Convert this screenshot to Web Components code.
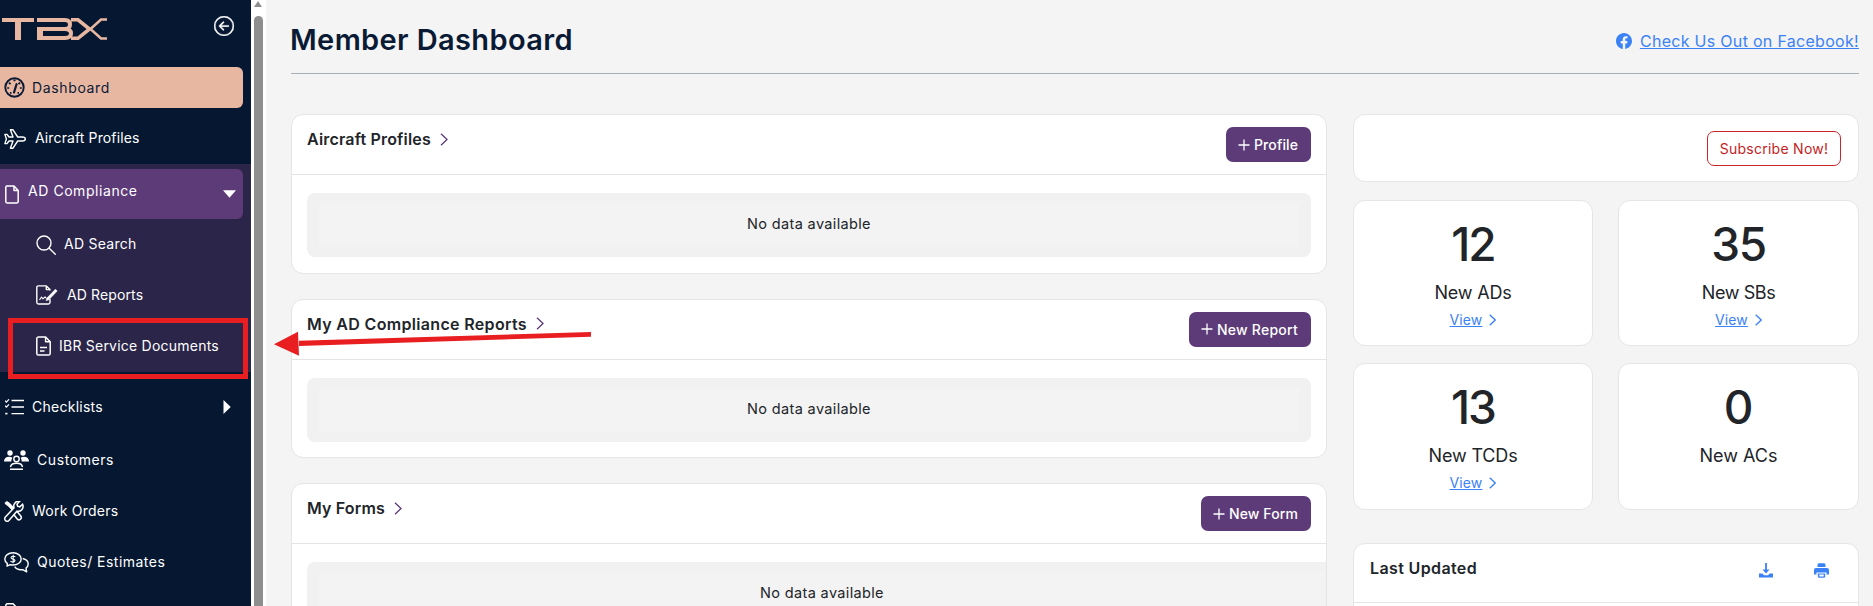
<!doctype html>
<html lang="en">
<head>
<meta charset="utf-8">
<title>Member Dashboard</title>
<style>
html,body{margin:0;height:100%;background:#f4f4f4;overflow:hidden}
body{font-family:Inter,"Liberation Sans",sans-serif;color:#212529}
svg{display:block}
</style>
</head>
<body>
<template id="t-app"><style>
:host{display:flex;width:1873px;height:606px;overflow:hidden;position:relative}
.main{flex:1;min-width:0;padding:0 14px 0 25px}
</style><slot name="side"></slot><slot name="bar"></slot><div class="main"><slot></slot></div><slot name="over"></slot></template>

<template id="t-sidebar"><style>
:host{display:block;width:251px;height:606px;flex:none;background:#061831;overflow:hidden}
.brand{height:67px;display:flex;justify-content:space-between;align-items:flex-start;padding:0 17px 0 2px;box-sizing:border-box}
</style><div class="brand"><slot name="logo"></slot><slot name="back"></slot></div><slot></slot></template>

<template id="t-item"><style>
:host{display:flex;align-items:center;box-sizing:border-box;width:243px;height:var(--h,50px);margin-top:var(--mt,0);padding-left:var(--pl,4px);padding-bottom:var(--pb,0);gap:var(--gap,8px);font-size:14px;font-weight:400;color:#fff;white-space:nowrap;position:relative}
:host([active]){background:#e8b7a2;color:#0a1a35;font-weight:400;border-radius:0 6px 6px 0}
:host([open]){background:#5c3b78;border-radius:0 6px 6px 0}
:host(:not([active])) .x{padding-bottom:2px}
.x{padding-bottom:1px}
.c{margin-left:auto;margin-right:var(--cr,7px);flex:none}
</style><slot name="icon"></slot><span class="x"><slot></slot></span><span class="c"><slot name="caret"></slot></span></template>

<template id="t-group"><style>
:host{display:block;margin-top:0;padding-top:5px;height:208px;box-sizing:border-box;background:#2a2549}
</style><slot></slot></template>

<template id="t-scroll"><style>
:host{display:block;width:15px;height:606px;flex:none;background:#fff;box-sizing:border-box;padding:1px 3px 0}
.up{width:0;height:0;border-left:4.5px solid transparent;border-right:4.5px solid transparent;border-bottom:6px solid #8e8e8e}
.thumb{width:9px;height:600px;margin-top:9px;background:#8e8e8e;border-radius:5px 5px 0 0}
</style><div class="up"></div><div class="thumb"></div></template>

<template id="t-head"><style>
:host{display:flex;justify-content:space-between;align-items:center;height:66px;padding-top:7px;border-bottom:1px solid #a8aeb6;margin-bottom:40px}
.t{font-size:29px;font-weight:600;letter-spacing:.37px;color:#0a1a35;line-height:34px;margin-left:-1px}
.l{display:flex;align-items:center;gap:8px;color:#3b82f6;font-size:16px;letter-spacing:.3px;margin-top:2px}
.l span{text-decoration:underline}
</style><div class="t"><slot name="title"></slot></div><div class="l"><slot name="icon"></slot><span><slot name="link"></slot></span></div></template>

<template id="t-layout"><style>
:host{display:grid;grid-template-columns:1036px 506px;column-gap:26px;align-items:start}
.col{display:flex;flex-direction:column}
</style><div class="col"><slot name="left"></slot></div><div class="col"><slot name="right"></slot></div></template>

<template id="t-card"><style>
:host{display:block;background:#fff;border:1px solid #e5e5e5;border-radius:12px;box-sizing:border-box;overflow:hidden;height:159.5px;margin-bottom:25px}
.h{display:flex;justify-content:space-between;align-items:flex-start;height:59px;box-sizing:border-box;padding:12px 15px 0}
.line{height:1px;background:#e4e4e4}
.tt{display:flex;align-items:center;gap:9px;font-size:16px;font-weight:600;color:#212529;line-height:24px}
.b{padding:18px 15px 16px}
</style><div class="h"><div class="tt"><span><slot name="title"></slot></span><slot name="chev"></slot></div><div class="a"><slot name="action"></slot></div></div><div class="line"></div><div class="b"><slot></slot></div></template>

<template id="t-empty"><style>
:host{display:block;background:#f1f1f1;border-radius:8px;padding:10px 12px;height:64px;box-sizing:border-box;font-size:14.5px;color:#212529;letter-spacing:.35px}
:host([wide]){margin-right:-26px}
div{height:44px;background:#f3f3f3;display:flex;align-items:center;justify-content:center;box-sizing:border-box;padding-bottom:3px}
</style><div><slot></slot></div></template>

<template id="t-btn"><style>
:host{display:inline-flex;align-items:center;gap:4px;height:35px;padding:0 13px 0 12px;box-sizing:border-box;background:#5c3b78;color:#fff;border-radius:7px;font-size:14px;font-weight:500;white-space:nowrap}
</style><slot name="icon"></slot><span><slot></slot></span></template>

<template id="t-sub"><style>
:host{display:flex;justify-content:flex-end;align-items:center;height:68px;padding-right:17px;box-sizing:border-box;background:#fff;border:1px solid #e5e5e5;border-radius:12px;margin-bottom:18px}
a{display:flex;align-items:center;justify-content:center;height:35px;width:134px;box-sizing:border-box;border:1px solid #c9252c;border-radius:7px;color:#c41e24;font-size:14px;font-weight:400;letter-spacing:.27px;white-space:nowrap}
</style><a><slot></slot></a></template>

<template id="t-stats"><style>
:host{display:grid;grid-template-columns:240px 241px;column-gap:25px;row-gap:17px;grid-template-rows:146px 147px;margin-bottom:33px}
</style><slot></slot></template>

<template id="t-stat"><style>
:host{display:flex;flex-direction:column;align-items:center;background:#fff;border:1px solid #e5e5e5;border-radius:12px;box-sizing:border-box;padding-top:13px}
.n{font-size:46px;font-weight:500;line-height:60px;color:#212529}
.l{font-size:18px;line-height:28px;margin-top:5px;color:#212529}
.v{display:flex;align-items:center;gap:7px;font-size:14px;line-height:20px;margin-top:3px;color:#3b82f6;letter-spacing:.1px}
.v span{text-decoration:underline}
</style><div class="n"><slot name="n"></slot></div><div class="l"><slot name="l"></slot></div><div class="v"><span><slot name="v"></slot></span><slot name="chev"></slot></div></template>

<template id="t-last"><style>
:host{display:block;background:#fff;border:1px solid #e5e5e5;border-radius:12px;box-sizing:border-box;height:120px}
.h{display:flex;align-items:flex-start;height:59px;box-sizing:border-box;padding:12px 29px 0 16px;border-bottom:1px solid #e4e4e4}
.t{flex:1;font-size:16px;font-weight:600;line-height:24px;letter-spacing:.37px}
.i{display:flex;gap:41px;padding-top:7px}
</style><div class="h"><div class="t"><slot name="title"></slot></div><div class="i"><slot name="icons"></slot></div></div></template>

<tb-app>
  <tb-sidebar slot="side">
    <svg slot="logo" width="106" height="67" viewBox="0 0 106 67" fill="none" stroke="#e8b7a2">
      <g stroke-width="4">
        <path d="M0 20H32"/><path d="M35 20H63Q68 20 68 24.500T63 29H41M63 29Q69 29 69 33.500T63 38H35"/>
      </g>
      <rect x="13" y="20" width="6" height="20" fill="#e8b7a2" stroke="none"/>
      <rect x="35" y="27" width="6" height="13" fill="#e8b7a2" stroke="none"/>
      <path d="M69 19.800H76L87.500 29 76 38.300H69" stroke-width="3.600"/>
      <path d="M105 19.500H99L88.500 29 99 38.500H105" stroke-width="2.600"/>
    </svg>
    <svg slot="back" width="20" height="20" viewBox="0 0 16 16" fill="#fff" stroke="#fff" stroke-width=".35" style="margin-top:16px"><path d="M1 8a7 7 0 1 0 14 0A7 7 0 0 0 1 8zm15 0A8 8 0 1 1 0 8a8 8 0 0 1 16 0zm-4.500-.5a.5.5 0 0 1 0 1H5.707l2.147 2.146a.5.5 0 0 1-.708.708l-3-3a.5.5 0 0 1 0-.708l3-3a.5.5 0 1 1 .708.708L5.707 7.500H11.500z"/></svg>

    <tb-item active style="--h:41px;--gap:7px;letter-spacing:.64px">
      <svg slot="icon" width="21" height="21" viewBox="0 0 21 21" fill="none" stroke="#0a1a35"><circle cx="10.500" cy="10.500" r="9.200" stroke-width="1.900"/><path d="M10 15.500L12.600 7.200" stroke-width="2.200" stroke-linecap="round"/><path d="M9.500 3.400h2M5 5.600l1.500 1.500M3.200 11h2M16 5.600l-1.500 1.500M17.800 11h-2M6 15.800h1.500M13.500 15.800H15" stroke-width="1.700"/></svg>
      Dashboard</tb-item>
    <tb-item style="--h:51px;--mt:5px;--gap:9px;letter-spacing:.12px">
      <svg slot="icon" width="22" height="20" viewBox="0 0 22 20" fill="none" stroke="#fff" stroke-width="1.400" stroke-linejoin="round"><path d="M21.300 10c0-1.200-1.500-2-3-2h-4.600L9 .8H6.400L9 8H5L3 5.400H.9L2.400 10 .9 14.600H3L5 12h4l-2.600 7.200H9l4.700-7.200h4.600c1.500 0 3-.8 3-2z"/></svg>
      Aircraft Profiles</tb-item>
    <tb-group>
      <tb-item open style="--pl:5px;--gap:9px;--pb:5px;letter-spacing:.56px">
        <svg slot="icon" width="14" height="19" viewBox="0 0 14 19" fill="none" stroke="#fff" stroke-width="1.500" stroke-linejoin="round" style="margin-top:5px"><path d="M1.800.9H9L13.200 5.600V16.400a1.600 1.600 0 0 1-1.600 1.700H2.400A1.600 1.600 0 0 1 .8 16.400V2.500A1.600 1.600 0 0 1 1.800.9Z"/><path d="M9 .9V5.600H13.200"/></svg>
        AD Compliance
        <svg slot="caret" width="13" height="8" viewBox="0 0 13 8" fill="#fff" style="margin-top:5px"><path d="M0 .3H13L6.500 7.800Z"/></svg>
      </tb-item>
      <tb-item style="--h:51px;--pl:36px;--gap:8px;letter-spacing:.26px">
        <svg slot="icon" width="20" height="20" viewBox="0 0 20 20" fill="none" stroke="#fff" stroke-width="1.400" stroke-linecap="round"><circle cx="8" cy="8" r="7"/><path d="M13.200 13.200L19.300 19.300"/></svg>
        AD Search</tb-item>
      <tb-item style="--h:50px;--pl:36px;--gap:9px;letter-spacing:.12px">
        <svg slot="icon" width="22" height="20" viewBox="0 0 22 20" fill="none" stroke="#fff" stroke-width="1.400" stroke-linejoin="round"><path d="M14 5.500V4.600L10.300.9H2.400A1.600 1.600 0 0 0 .8 2.500V17.500A1.600 1.600 0 0 0 2.400 19H12.400A1.600 1.600 0 0 0 14 17.500V14"/><path d="M10.300.9V4.600H14"/><path d="M3.500 15l2-3 1.500 1.800 2-2 1.500 1.500" stroke-width="1.100"/><path d="M11 13l8.400-8.800 1.800 1.800L12.800 14.800l-2.800.8z" fill="#fff" stroke-width=".6"/></svg>
        AD Reports</tb-item>
      <tb-item style="--h:52px;--pl:36px;--gap:8px;letter-spacing:.23px">
        <svg slot="icon" width="15" height="20" viewBox="0 0 15 20" fill="none" stroke="#fff" stroke-width="1.500" stroke-linejoin="round"><path d="M2.400.9H9.600L14.200 5.800V17.400A1.700 1.700 0 0 1 12.500 19.100H2.400A1.700 1.700 0 0 1 .8 17.400V2.600A1.700 1.700 0 0 1 2.400.9Z"/><path d="M9.600.9V5.800H14.200"/><path d="M4 11.500H11M4 15H8.500" stroke-width="1.600"/></svg>
        IBR Service Documents</tb-item>
    </tb-group>
    <tb-item style="--mt:10px;--pl:5px;--gap:8px;--cr:12px;letter-spacing:.26px">
      <svg slot="icon" width="19" height="16" viewBox="0 0 19 16" fill="none" stroke="#fff" stroke-width="1.400"><path d="M6.500 1.500H19M6.500 8H19M6.500 14.600H19"/><path d="M0 1.600l1.400 1.500L4 .3M0 6.600l1.400 1.500L4 5.300" stroke-width="1.200"/><path d="M.2 14.600H2.500" stroke-width="1.600"/></svg>
      Checklists
      <svg slot="caret" width="8" height="14" viewBox="0 0 8 14" fill="#fff"><path d="M.5 0L7.700 7L.5 14Z"/></svg>
    </tb-item>
    <tb-item style="--mt:3px;--gap:8px;letter-spacing:.58px">
      <svg slot="icon" width="25" height="20" viewBox="0 0 25 20" fill="#fff"><circle cx="6" cy="3" r="2.700"/><circle cx="19" cy="3" r="2.700"/><path d="M0 11.500c0-3 2-4.700 5-4.700 1.400 0 2.500.3 3.400 1a6 6 0 0 0-1.100 3.700H0zM25 11.500c0-3-2-4.700-5-4.700-1.400 0-2.500.3-3.400 1a6 6 0 0 1 1.100 3.700H25z"/><circle cx="12.500" cy="9" r="2.700" fill="none" stroke="#fff" stroke-width="1.400"/><path d="M6.500 17c.3-2.700 2.800-3.700 6-3.700s5.700 1 6 3.700M6 19.200H19" fill="none" stroke="#fff" stroke-width="1.500"/></svg>
      Customers</tb-item>
    <tb-item style="--mt:1px;--gap:8px;letter-spacing:.24px">
      <svg slot="icon" width="20" height="21" viewBox="0 0 20 21" fill="none" stroke="#fff"><path d="M1.200 1.500L3 .5 6 2.500 12 9l-2 2-6-6.200-2.800-2z" fill="#fff" stroke-width=".8"/><path d="M8.800 12.200L13 17.800a2.300 2.300 0 0 0 3.800-2.800L12.300 9.600" stroke-width="1.500"/><path d="M18.600 3.200l-2.800 2.600-2.200-.6-.6-2.100L15.700.3A5 5 0 0 0 10 6.800L1.400 16a2.400 2.400 0 0 0 3.500 3.400L13 10.200a5 5 0 0 0 5.600-7z" fill="#061831" stroke-width="1.500"/></svg>
      Work Orders</tb-item>
    <tb-item style="--mt:1px;--gap:8px;letter-spacing:.47px">
      <svg slot="icon" width="25" height="21" viewBox="0 0 25 21" fill="none" stroke="#fff" stroke-width="1.400" stroke-linejoin="round"><path d="M9 .8C4.300.8.800 3.500.8 7c0 2 1 3.500 2.600 4.600l-.4 2.500 3.200-1.400c.9.2 1.800.3 2.800.3 4.700 0 8.200-2.700 8.200-6S13.700.8 9 .8z"/><path d="M18.700 6.500C21.800 7.200 24.200 9.200 24.200 12c0 1.700-.9 3.100-2.200 4l.7 3.800-4-2.200c-3.400.4-6.600-.6-8-3"/><path d="M11.300 5c-.5-.9-3.900-1.500-4.300.6-.3 2 4.400 1 4 3.100-.4 1.900-3.700 1.400-4.500.3M9.200 2.800v8.400" stroke-width="1.100"/></svg>
      Quotes/ Estimates</tb-item>
    <tb-item style="--mt:16px;--pl:5px;align-items:flex-start">
      <svg slot="icon" width="12" height="18" viewBox="0 0 12 18" fill="none" stroke="#fff" stroke-width="1.500"><path d="M2 .8H8L11.200 4V16H.8V2z"/></svg>
    </tb-item>
  </tb-sidebar>

  <tb-scroll slot="bar"></tb-scroll>

  <tb-head>
    <span slot="title">Member Dashboard</span>
    <svg slot="icon" width="16" height="16" viewBox="0 0 16 16" fill="#3b82f6"><path d="M16 8.049c0-4.446-3.582-8.050-8-8.050C3.580 0-.002 3.603-.002 8.050c0 4.017 2.926 7.347 6.750 7.951v-5.625h-2.030V8.050H6.750V6.275c0-2.017 1.195-3.131 3.022-3.131.876 0 1.791.157 1.791.157v1.980h-1.009c-.993 0-1.303.621-1.303 1.258v1.510h2.218l-.354 2.326H9.250V16c3.824-.604 6.750-3.934 6.750-7.951z"/></svg>
    <span slot="link">Check Us Out on Facebook!</span>
  </tb-head>

  <tb-layout>
    <tb-card slot="left">
      <span slot="title" style="letter-spacing:.18px">Aircraft Profiles</span>
      <svg slot="chev" width="8" height="13" viewBox="0 0 8 13" fill="none" stroke="#5c3b78" stroke-width="1.300"><path d="M1 .7L7 6.500 1 12.300"/></svg>
      <tb-btn slot="action" style="letter-spacing:.11px"><svg slot="icon" width="12" height="12" viewBox="0 0 12 12" stroke="#fff" stroke-width="1.300"><path d="M6 .5V11.500M.5 6H11.500"/></svg>Profile</tb-btn>
      <tb-empty>No data available</tb-empty>
    </tb-card>
    <tb-card slot="left">
      <span slot="title" style="letter-spacing:.33px">My AD Compliance Reports</span>
      <svg slot="chev" width="8" height="13" viewBox="0 0 8 13" fill="none" stroke="#5c3b78" stroke-width="1.300"><path d="M1 .7L7 6.500 1 12.300"/></svg>
      <tb-btn slot="action" style="letter-spacing:.25px"><svg slot="icon" width="12" height="12" viewBox="0 0 12 12" stroke="#fff" stroke-width="1.300"><path d="M6 .5V11.500M.5 6H11.500"/></svg>New Report</tb-btn>
      <tb-empty>No data available</tb-empty>
    </tb-card>
    <tb-card slot="left">
      <span slot="title" style="letter-spacing:.16px">My Forms</span>
      <svg slot="chev" width="8" height="13" viewBox="0 0 8 13" fill="none" stroke="#5c3b78" stroke-width="1.300"><path d="M1 .7L7 6.500 1 12.300"/></svg>
      <tb-btn slot="action" style="letter-spacing:.11px"><svg slot="icon" width="12" height="12" viewBox="0 0 12 12" stroke="#fff" stroke-width="1.300"><path d="M6 .5V11.500M.5 6H11.500"/></svg>New Form</tb-btn>
      <tb-empty wide>No data available</tb-empty>
    </tb-card>

    <tb-sub slot="right">Subscribe Now!</tb-sub>
    <tb-stats slot="right">
      <tb-stat><span slot="n" style="letter-spacing:-2px">12</span><span slot="l" style="letter-spacing:-.2px">New ADs</span><span slot="v">View</span><svg slot="chev" width="7" height="12" viewBox="0 0 7 12" fill="none" stroke="#3b82f6" stroke-width="1.300"><path d="M.7.7L6.200 6 .7 11.300"/></svg></tb-stat>
      <tb-stat><span slot="n" style="letter-spacing:-1.500px">35</span><span slot="l" style="letter-spacing:-.4px">New SBs</span><span slot="v">View</span><svg slot="chev" width="7" height="12" viewBox="0 0 7 12" fill="none" stroke="#3b82f6" stroke-width="1.300"><path d="M.7.7L6.200 6 .7 11.300"/></svg></tb-stat>
      <tb-stat><span slot="n" style="letter-spacing:-2px">13</span><span slot="l" style="letter-spacing:-.15px">New TCDs</span><span slot="v">View</span><svg slot="chev" width="7" height="12" viewBox="0 0 7 12" fill="none" stroke="#3b82f6" stroke-width="1.300"><path d="M.7.7L6.200 6 .7 11.300"/></svg></tb-stat>
      <tb-stat><span slot="n">0</span><span slot="l">New ACs</span></tb-stat>
    </tb-stats>
    <tb-last slot="right">
      <span slot="title">Last Updated</span>
      <svg slot="icons" width="14" height="15" viewBox="0 0 14 15" fill="#3b82f6"><path d="M6.100 0H7.900V6.500H10.500L7 10.500 3.500 6.500H6.100Z"/><path d="M0 10.500H3.300L5 12.300H9L10.700 10.500H14V14.500H0Z"/></svg>
      <svg slot="icons" width="15" height="15" viewBox="0 0 15 15" fill="#3b82f6"><path d="M3.500 4V1.800A1.500 1.500 0 0 1 5 .3H10A1.500 1.500 0 0 1 11.500 1.800V4Z"/><path d="M2 5H13A2 2 0 0 1 15 7V11.500H12.500V9.500H2.500V11.500H0V7A2 2 0 0 1 2 5Z"/><path d="M3.800 10.500H11.200V13.300A1.500 1.500 0 0 1 9.700 14.800H5.300A1.500 1.500 0 0 1 3.800 13.300Z"/><path d="M5.300 11.500H9.700V13.500H5.300Z" fill="#fff"/></svg>
    </tb-last>
  </tb-layout>

  <tb-note slot="over"></tb-note>
</tb-app>

<template id="t-note"><style>
:host{display:block;position:absolute;left:0;top:0;width:0;height:0}
.box{position:absolute;left:8px;top:318px;width:240px;height:61px;box-sizing:border-box;border:5px solid #e81e20}
svg{position:absolute;left:270px;top:325px}
</style><div class="box"></div><svg width="325" height="35" viewBox="270 325 325 35" fill="#e81e20"><path d="M591 332V336.700L299 346V340.700Z"/><path d="M274 344.300L298 331.700L299 355.700Z"/></svg></template>

<script>
const defs={ 'tb-app':'t-app','tb-sidebar':'t-sidebar','tb-item':'t-item','tb-group':'t-group','tb-scroll':'t-scroll','tb-head':'t-head','tb-layout':'t-layout','tb-card':'t-card','tb-empty':'t-empty','tb-btn':'t-btn','tb-sub':'t-sub','tb-stats':'t-stats','tb-stat':'t-stat','tb-last':'t-last','tb-note':'t-note'};
for(const [name,id] of Object.entries(defs)){
  customElements.define(name,class extends HTMLElement{
    constructor(){super();this.attachShadow({mode:'open'}).appendChild(document.getElementById(id).content.cloneNode(true));}
  });
}
</script>
</body>
</html>
